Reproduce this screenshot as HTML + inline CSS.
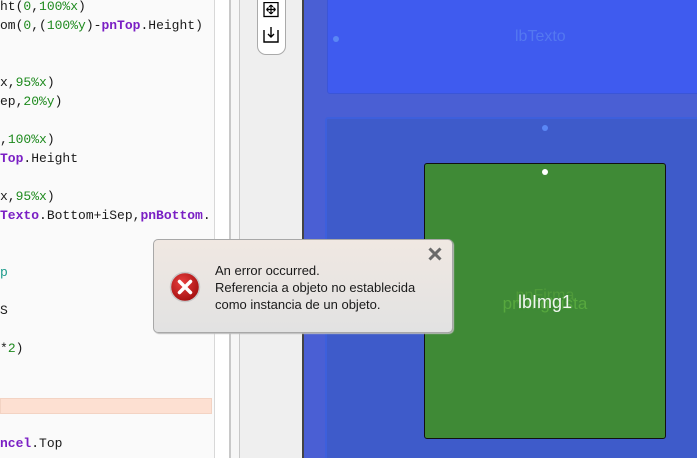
<!DOCTYPE html>
<html><head><meta charset="utf-8"><style>
*{margin:0;padding:0;box-sizing:border-box}
html,body{width:697px;height:458px;overflow:hidden}
body{position:relative;background:#fafafa;font-family:"Liberation Sans",sans-serif}
.abs{position:absolute}
#code{left:0;top:-3px;width:214px;font-family:"Liberation Mono",monospace;font-size:13px;line-height:19px;color:#1a1a1a}
#code div{height:19px;white-space:pre}
.g{color:#1e8a1e}.p{color:#7a1fc4;font-weight:bold}.t{color:#1a9a8a}
</style></head><body>
<div class="abs" style="left:0;top:398px;width:212px;height:16px;background:#fde0d2;border:1px solid #f3d3c3"></div>
<div id="code" class="abs"><div>ht(<span class="g">0</span>,<span class="g">100%x</span>)</div><div>om(<span class="g">0</span>,(<span class="g">100%y</span>)-<span class="p">pnTop</span>.Height)</div><div></div><div></div><div>x,<span class="g">95%x</span>)</div><div>ep,<span class="g">20%y</span>)</div><div></div><div>,<span class="g">100%x</span>)</div><div><span class="p">Top</span>.Height</div><div></div><div>x,<span class="g">95%x</span>)</div><div><span class="p">Texto</span>.Bottom+iSep,<span class="p">pnBottom</span>.</div><div></div><div></div><div><span class="t">p</span></div><div></div><div>S</div><div></div><div>*<span class="g">2</span>)</div><div></div><div></div><div></div><div></div><div><span class="p">ncel</span>.Top</div></div>
<div class="abs" style="left:214px;top:0;width:1px;height:458px;background:#d8d8d8"></div>
<div class="abs" style="left:215px;top:0;width:14px;height:458px;background:#fff"></div>
<div class="abs" style="left:229px;top:0;width:2px;height:458px;background:#c8c8c8"></div>
<div class="abs" style="left:231px;top:0;width:8px;height:458px;background:#f6f6f6"></div>
<div class="abs" style="left:239px;top:0;width:1px;height:458px;background:#c8c8c8"></div>
<div class="abs" style="left:240px;top:0;width:62px;height:458px;background:#efefef"></div>
<div class="abs" style="left:302px;top:0;width:2px;height:458px;background:#444"></div>
<div class="abs" style="left:257px;top:-10px;width:29px;height:65px;background:#fff;border:1px solid #aaa;border-radius:0 0 9px 9px"></div>
<svg class="abs" style="left:263px;top:2px" width="17" height="44" viewBox="0 0 17 44">
<rect x="1" y="0.5" width="14" height="14" fill="none" stroke="#000" stroke-width="1.3"/>
<path d="M8 3v9M3.5 7.5h9M8 3l-2 2M8 3l2 2M8 12l-2-2M8 12l2-2M3.5 7.5l2-2M3.5 7.5l2 2M12.5 7.5l-2-2M12.5 7.5l-2 2" stroke="#000" stroke-width="1.2" fill="none"/>
<path d="M1 28v12h14V28M8 25v10M5 32l3 3 3-3" stroke="#000" stroke-width="1.4" fill="none"/>
</svg>
<div class="abs" style="left:304px;top:0;width:393px;height:458px;background:#4a5fd4"></div>
<div class="abs" style="left:327px;top:-5px;width:375px;height:99px;background:#3f5bef;border:1px solid #3a55d8;border-radius:3px"></div>
<div class="abs" style="left:333px;top:36px;width:6px;height:6px;border-radius:50%;background:#5a87f5"></div>
<div class="abs" style="left:515px;top:28px;font-size:16px;color:#5478f0">lbTexto</div>
<div class="abs" style="left:325px;top:117px;width:380px;height:350px;background:#3e5bca;border:2px solid #3d5fdc;border-radius:3px"></div>
<div class="abs" style="left:542px;top:125px;width:6px;height:6px;border-radius:50%;background:#5a87f5"></div>
<div class="abs" style="left:424px;top:163px;width:242px;height:276px;background:#3f8a36;border:1px solid #111;border-radius:3px"></div>
<div class="abs" style="left:542px;top:169px;width:6px;height:6px;border-radius:50%;background:#fff"></div>
<div class="abs" style="left:500px;top:287px;font-size:16px;color:#4f9a3a;width:90px;text-align:center">pnFirma</div>
<div class="abs" style="left:480px;top:294px;font-size:17px;color:#57a83e;width:130px;text-align:center">pnImgVista</div>
<div class="abs" style="left:480px;top:292px;font-size:18px;color:#f0f6f0;width:130px;text-align:center;text-shadow:0 0 2px #3f8a36">lbImg1</div>
<div class="abs" style="left:153px;top:239px;width:300px;height:94px;border:1px solid #a8a8a8;border-radius:5px;background:linear-gradient(#f0e8e2,#e2e2e2);box-shadow:1px 1px 1px #bbb"></div>
<svg class="abs" style="left:169px;top:271px" width="32" height="32" viewBox="0 0 32 32">
<defs><radialGradient id="r" cx="40%" cy="35%" r="70%"><stop offset="0" stop-color="#e84040"/><stop offset="1" stop-color="#a00c0c"/></radialGradient></defs>
<circle cx="16" cy="16" r="14.5" fill="url(#r)" stroke="#c8c8c8" stroke-width="1.5"/>
<path d="M10.5 10.5l11 11M21.5 10.5l-11 11" stroke="#fff" stroke-width="3.5" stroke-linecap="round"/>
</svg>
<svg class="abs" style="left:427px;top:246px" width="16" height="16" viewBox="0 0 16 16">
<path d="M2.5 2.5l11 11M13.5 2.5l-11 11" stroke="#6a6a6a" stroke-width="3"/>
</svg>
<div class="abs" style="left:215px;top:262px;font-size:13px;line-height:17px;color:#1a1a1a">An error occurred.<br>Referencia a objeto no establecida<br>como instancia de un objeto.</div>
</body></html>
